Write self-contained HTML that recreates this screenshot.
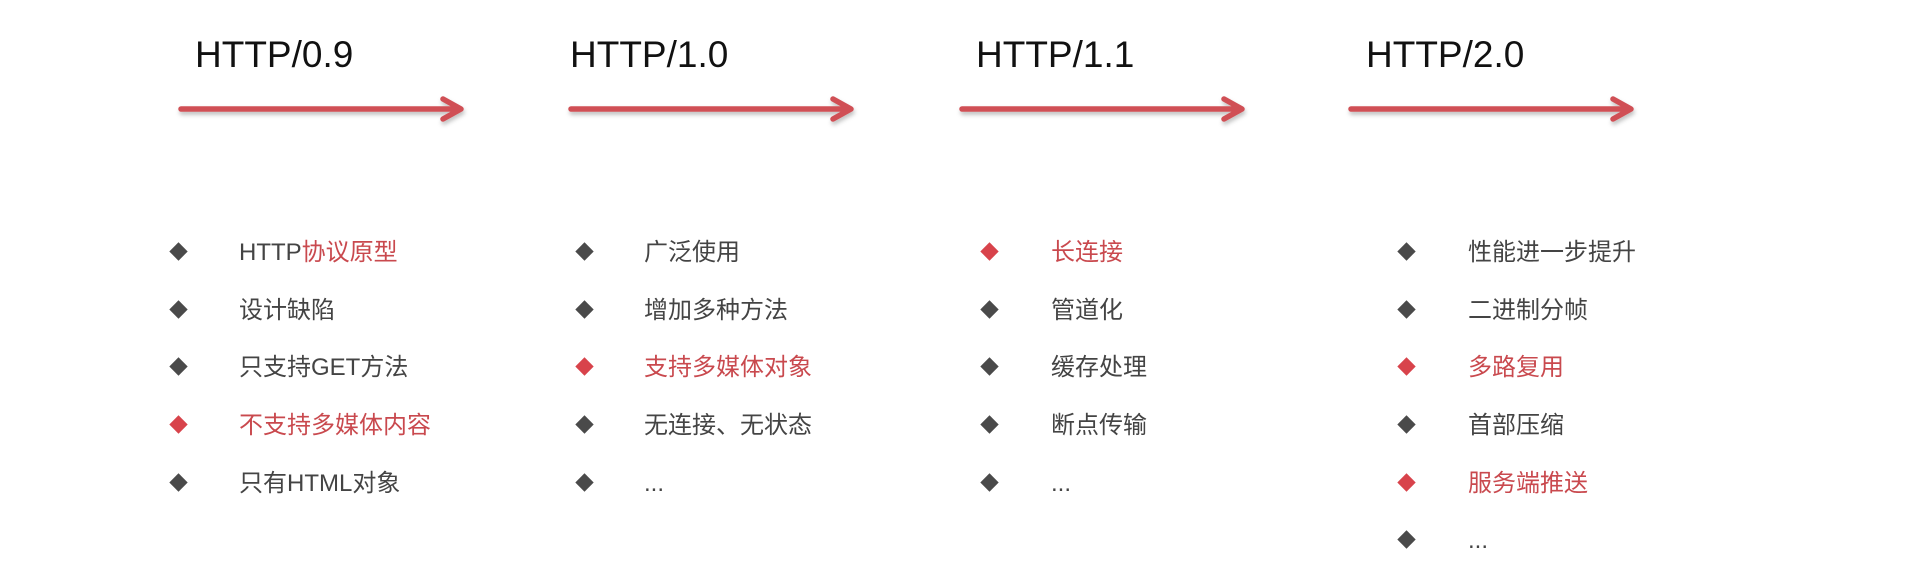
<!DOCTYPE html>
<html><head><meta charset="utf-8"><style>
html,body{margin:0;padding:0;background:#fff;width:1920px;height:568px;overflow:hidden;position:relative}
.t{position:absolute;top:33px;font-family:"Liberation Sans",sans-serif;font-size:37px;color:#111;line-height:44px}
.it{position:absolute;font-family:"Liberation Sans","Noto Sans CJK SC",sans-serif;font-size:24px;color:#444;line-height:30px;white-space:nowrap;margin-top:3px}
.r{color:#c9494e}
.d{position:absolute;width:13px;height:13px;background:#4a4a4a;transform:rotate(45deg);margin-top:2px}
.d.r{background:#d8434b}
svg{position:absolute;left:0;top:0}
</style></head><body>
<svg width="1920" height="568">
<defs><filter id="s" x="-5%" y="-100%" width="110%" height="300%"><feDropShadow dx="1" dy="3" stdDeviation="2" flood-color="#000" flood-opacity="0.25"/></filter></defs>
<g stroke="#d05055" stroke-width="5.5" fill="none" stroke-linecap="round" stroke-linejoin="round" filter="url(#s)">
<path d="M181 109 H460 M443 99 L461 109 L443 119"/>
<path d="M571 109 H850 M833 99 L851 109 L833 119"/>
<path d="M962 109 H1241 M1224 99 L1242 109 L1224 119"/>
<path d="M1351 109 H1630 M1613 99 L1631 109 L1613 119"/>
</g></svg>
<div class="t" style="left:195px">HTTP/0.9</div>
<div class="t" style="left:570px">HTTP/1.0</div>
<div class="t" style="left:976px">HTTP/1.1</div>
<div class="t" style="left:1366px">HTTP/2.0</div>

<div class="d" style="left:172px;top:243px"></div><div class="it" style="left:239px;top:235px">HTTP<span class="r">协议原型</span></div>
<div class="d" style="left:172px;top:301px"></div><div class="it" style="left:239px;top:293px">设计缺陷</div>
<div class="d" style="left:172px;top:358px"></div><div class="it" style="left:239px;top:350px">只支持GET方法</div>
<div class="d r" style="left:172px;top:416px"></div><div class="it r" style="left:239px;top:408px">不支持多媒体内容</div>
<div class="d" style="left:172px;top:474px"></div><div class="it" style="left:239px;top:466px">只有HTML对象</div>

<div class="d" style="left:578px;top:243px"></div><div class="it" style="left:644px;top:235px">广泛使用</div>
<div class="d" style="left:578px;top:301px"></div><div class="it" style="left:644px;top:293px">增加多种方法</div>
<div class="d r" style="left:578px;top:358px"></div><div class="it r" style="left:644px;top:350px">支持多媒体对象</div>
<div class="d" style="left:578px;top:416px"></div><div class="it" style="left:644px;top:408px">无连接、无状态</div>
<div class="d" style="left:578px;top:474px"></div><div class="it" style="left:644px;top:466px">...</div>

<div class="d r" style="left:983px;top:243px"></div><div class="it r" style="left:1051px;top:235px">长连接</div>
<div class="d" style="left:983px;top:301px"></div><div class="it" style="left:1051px;top:293px">管道化</div>
<div class="d" style="left:983px;top:358px"></div><div class="it" style="left:1051px;top:350px">缓存处理</div>
<div class="d" style="left:983px;top:416px"></div><div class="it" style="left:1051px;top:408px">断点传输</div>
<div class="d" style="left:983px;top:474px"></div><div class="it" style="left:1051px;top:466px">...</div>

<div class="d" style="left:1400px;top:243px"></div><div class="it" style="left:1468px;top:235px">性能进一步提升</div>
<div class="d" style="left:1400px;top:301px"></div><div class="it" style="left:1468px;top:293px">二进制分帧</div>
<div class="d r" style="left:1400px;top:358px"></div><div class="it r" style="left:1468px;top:350px">多路复用</div>
<div class="d" style="left:1400px;top:416px"></div><div class="it" style="left:1468px;top:408px">首部压缩</div>
<div class="d r" style="left:1400px;top:474px"></div><div class="it r" style="left:1468px;top:466px">服务端推送</div>
<div class="d" style="left:1400px;top:531px"></div><div class="it" style="left:1468px;top:523px">...</div>
</body></html>
